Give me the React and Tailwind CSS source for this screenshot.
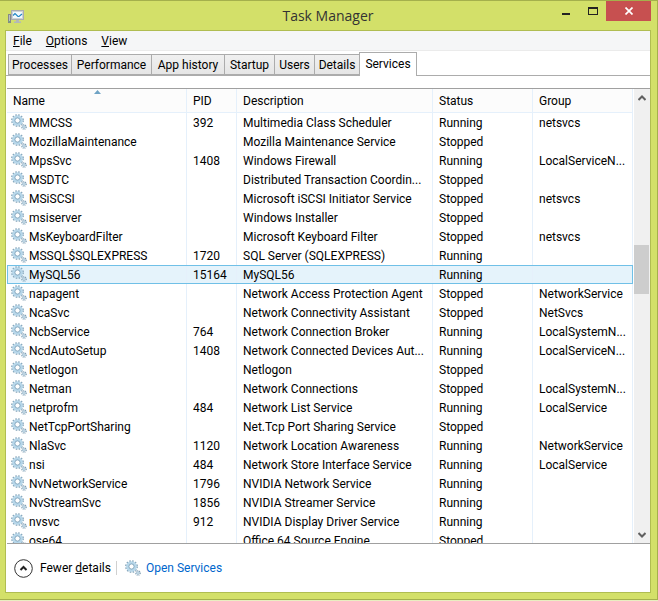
const rows = [
  ["MMCSS", "392", "Multimedia Class Scheduler", "Running", "netsvcs"],
  ["MozillaMaintenance", "", "Mozilla Maintenance Service", "Stopped", ""],
  ["MpsSvc", "1408", "Windows Firewall", "Running", "LocalServiceN..."],
  ["MSDTC", "", "Distributed Transaction Coordin...", "Stopped", ""],
  ["MSiSCSI", "", "Microsoft iSCSI Initiator Service", "Stopped", "netsvcs"],
  ["msiserver", "", "Windows Installer", "Stopped", ""],
  ["MsKeyboardFilter", "", "Microsoft Keyboard Filter", "Stopped", "netsvcs"],
  ["MSSQL$SQLEXPRESS", "1720", "SQL Server (SQLEXPRESS)", "Running", ""],
  ["MySQL56", "15164", "MySQL56", "Running", ""],
  ["napagent", "", "Network Access Protection Agent", "Stopped", "NetworkService"],
  ["NcaSvc", "", "Network Connectivity Assistant", "Stopped", "NetSvcs"],
  ["NcbService", "764", "Network Connection Broker", "Running", "LocalSystemN..."],
  ["NcdAutoSetup", "1408", "Network Connected Devices Aut...", "Running", "LocalServiceN..."],
  ["Netlogon", "", "Netlogon", "Stopped", ""],
  ["Netman", "", "Network Connections", "Stopped", "LocalSystemN..."],
  ["netprofm", "484", "Network List Service", "Running", "LocalService"],
  ["NetTcpPortSharing", "", "Net.Tcp Port Sharing Service", "Stopped", ""],
  ["NlaSvc", "1120", "Network Location Awareness", "Running", "NetworkService"],
  ["nsi", "484", "Network Store Interface Service", "Running", "LocalService"],
  ["NvNetworkService", "1796", "NVIDIA Network Service", "Running", ""],
  ["NvStreamSvc", "1856", "NVIDIA Streamer Service", "Running", ""],
  ["nvsvc", "912", "NVIDIA Display Driver Service", "Running", ""],
  ["ose64", "", "Office 64 Source Engine", "Stopped", ""],
];

const columns = ["Name", "PID", "Description", "Status", "Group"];
const selected = "MySQL56";

function Gears() {
  return (
    <svg className="size-4 shrink-0" viewBox="0 0 16 16" aria-hidden="true">
      <circle cx="6.500" cy="6.500" r="5.600" fill="none" stroke="#86a5ba" strokeWidth="1.600" strokeDasharray="1.6 1.33" />
      <circle cx="6.500" cy="6.500" r="3.900" fill="none" stroke="#b7d7ea" strokeWidth="2.800" />
      <circle cx="6.500" cy="6.500" r="2.600" fill="#fff" stroke="#7b9fb8" strokeWidth="0.900" />
      <circle cx="13" cy="13" r="2.200" fill="none" stroke="#7f9cb0" strokeWidth="1.300" strokeDasharray="0.9 0.83" />
      <circle cx="13" cy="13" r="1.300" fill="#eef6fb" stroke="#9dbdd1" strokeWidth="1" />
    </svg>
  );
}

function AppIcon() {
  return (
    <svg className="h-4 w-4" viewBox="0 0 16 16" aria-hidden="true">
      <rect x="0.5" y="5.5" width="2" height="8" fill="#b9bfc2" stroke="#85898a" />
      <path d="M1 12h1v1H1z" fill="#5fc05f" />
      <rect x="3.5" y="1.5" width="12" height="9" fill="#cfd3d6" stroke="#a9adb0" />
      <rect x="5" y="3" width="9" height="6" fill="#f2faff" />
      <path d="M5 6.500L7 4.500l3 3h1l3-2.500" fill="none" stroke="#1f86c4" strokeWidth="1.200" />
      <path d="M8 11h3v1.500h2v1.500H6v-1.500h2z" fill="#b3b8b9" />
    </svg>
  );
}

function Tab({ width, children }) {
  return (
    <button role="tab" aria-selected="false" className={`-mr-px h-[21px] ${width} border border-[#acacac] bg-linear-to-b from-[#f0f0f0] to-[#e6e6e6] pt-px whitespace-nowrap`}>
      {children}
    </button>
  );
}

export default function App() {
  return (
    <div className="h-screen bg-[#e9eec0] pb-px font-[Roboto,'Open_Sans',sans-serif] text-[12px] leading-4 text-black">
      <div className="flex h-full flex-col border border-l-0 border-[#a4b04c] bg-[#d3e069] px-[5px] pr-[6px] pb-[6px]">
        <header className="grid h-[29px] shrink-0 grid-cols-[1fr_auto_1fr] items-start">
          <div className="pt-2 pl-[3px]"><AppIcon /></div>
          <h1 className="pt-1 font-['Open_Sans',sans-serif] text-[14px] leading-[22px] text-[#333]">Task Manager</h1>
          <div className="flex justify-end">
            <button aria-label="Minimize" className="flex h-5 w-[27px] justify-center">
              <svg width="27" height="20"><path d="M10 12h8v2h-8z" fill="#222" /></svg>
            </button>
            <button aria-label="Maximize" className="flex h-5 w-[27px] justify-center">
              <svg width="27" height="20"><path d="M9 6h10v8H9zM10 8v5h8V8z" fill="#222" fillRule="evenodd" /></svg>
            </button>
            <button aria-label="Close" className="flex h-5 w-[45px] items-center justify-center bg-[#c75050]">
              <svg width="8" height="8" viewBox="0 0 8 8"><path d="M0.500 0.500l7 7M7.500 0.500l-7 7" stroke="#fff" strokeWidth="1.700" /></svg>
            </button>
          </div>
        </header>

        <main className="flex min-h-0 flex-1 flex-col border border-[#b0bd52] bg-white">
          <nav className="flex h-5 shrink-0 items-center gap-[14px] border-b border-[#ebebeb] bg-[#f5f6f7] pl-[7px]">
            <button><u>F</u>ile</button>
            <button><u>O</u>ptions</button>
            <button><u>V</u>iew</button>
          </nav>

          <div role="tablist" className="flex h-[25px] shrink-0 items-end border-b border-[#acacac] pl-[2px]">
            <Tab width="w-16">Processes</Tab>
            <Tab width="w-[81px]">Performance</Tab>
            <Tab width="w-[74px]">App history</Tab>
            <Tab width="w-[51px]">Startup</Tab>
            <Tab width="w-[41px]">Users</Tab>
            <Tab width="w-[46px]">Details</Tab>
            <button role="tab" aria-selected="true" className="-mb-px h-6 w-[58px] border border-b-0 border-[#acacac] bg-white pb-[2px]">
              Services
            </button>
          </div>

          <section className="mt-3 ml-px flex min-h-0 flex-1 border-y border-[#a0a0a0]">
            <div className="min-w-0 flex-1 overflow-hidden">
              <table className="w-full table-fixed border-separate border-spacing-0 text-left">
                <colgroup>
                  <col className="w-[180px]" />
                  <col className="w-[50px]" />
                  <col className="w-[196px]" />
                  <col className="w-[100px]" />
                  <col />
                </colgroup>
                <thead>
                  <tr className="h-6 bg-[#fcfcfc]">
                    {columns.map((c) => (
                      <th key={c} className="relative border-r border-b border-[#e5f0fb] px-[6px] py-0 font-normal">
                        {c}
                        {c === "Name" && (
                          <svg className="absolute top-px left-[87px]" width="7" height="4" aria-hidden="true">
                            <path d="M3.500 0L7 4H0z" fill="#6fa3c4" />
                          </svg>
                        )}
                      </th>
                    ))}
                  </tr>
                </thead>
                <tbody>
                  {rows.map((row) => (
                    <tr key={row[0]} className={row[0] === selected ? "h-[19px] bg-[#e5f3fb] outline outline-[#70c0e7] -outline-offset-1" : "h-[19px]"}>
                      {row.map((cell, i) => (
                        <td key={i} className="border-r border-[#e5f0fb] px-[6px] pt-px pb-0 leading-[18px] whitespace-nowrap">
                          {i === 0 ? <span className="-ml-[2px] flex h-[18px] items-start gap-[2px]"><Gears />{cell}</span> : cell}
                        </td>
                      ))}
                    </tr>
                  ))}
                </tbody>
              </table>
            </div>
            <div className="ml-px flex w-4 shrink-0 flex-col items-center bg-[#f0f0f0]">
              <button aria-label="Scroll up" className="flex h-[17px] w-full items-center justify-center">
                <svg width="8" height="6"><path d="M0.500 5L4 1.500 7.500 5" fill="none" stroke="#606060" strokeWidth="2" /></svg>
              </button>
              <div className="flex w-full flex-1 flex-col">
                <div className="grow-[139]" />
                <div className="h-[49px] w-[15px] bg-[#cdcdcd]" />
                <div className="grow-[232]" />
              </div>
              <button aria-label="Scroll down" className="flex h-[17px] w-full items-center justify-center">
                <svg width="8" height="6"><path d="M0.500 1L4 4.500 7.500 1" fill="none" stroke="#606060" strokeWidth="2" /></svg>
              </button>
            </div>
          </section>

          <footer className="flex h-12 shrink-0 items-center pl-2">
            <button className="flex items-center gap-[7px]">
              <svg width="19" height="19" viewBox="0 0 19 19" aria-hidden="true">
                <circle cx="9.500" cy="9.500" r="8.800" fill="none" stroke="#333" />
                <path d="M6.500 11l3-3 3 3" fill="none" stroke="#222" strokeWidth="2" />
              </svg>
              <span>Fewer <u>d</u>etails</span>
            </button>
            <div className="mr-2 ml-[5px] h-[14px] w-px bg-[#d0d0d0]" />
            <a href="#services" className="flex items-center gap-[5px] text-[#0066cc]"><Gears />Open Services</a>
          </footer>
        </main>
      </div>
    </div>
  );
}
